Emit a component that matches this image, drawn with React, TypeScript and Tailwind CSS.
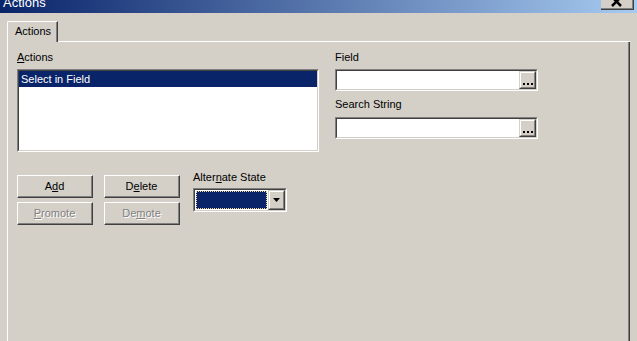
import React from "react";

function Btn({ children, disabled, w }: { children: React.ReactNode; disabled?: boolean; w: string }) {
  return (
    <div className={`${w} h-[23px] border border-t-white border-l-white border-b-[#404040] border-r-[#404040] bg-[#d4d0c8]`}>
      <div
        className={`w-full h-full border-b border-r border-[#808080] flex items-center justify-center text-[11px] leading-[13px] ${
          disabled ? "text-[#808080] [text-shadow:1px_1px_0_#ffffff]" : "text-black"
        }`}
      >
        {children}
      </div>
    </div>
  );
}

function Sunken({ children, className }: { children: React.ReactNode; className: string }) {
  return (
    <div className={`${className} border border-t-[#808080] border-l-[#808080] border-b-white border-r-white`}>
      <div className="w-full h-full border border-t-[#404040] border-l-[#404040] border-b-[#d4d0c8] border-r-[#d4d0c8] bg-white flex">
        {children}
      </div>
    </div>
  );
}

function SmallRaised({ children }: { children: React.ReactNode }) {
  return (
    <div className="w-[17px] h-full border border-t-[#d4d0c8] border-l-[#d4d0c8] border-b-[#404040] border-r-[#404040] bg-[#d4d0c8]">
      <div className="w-full h-full border border-t-white border-l-white border-b-[#808080] border-r-[#808080] flex items-center justify-center">
        {children}
      </div>
    </div>
  );
}

function Dots() {
  return (
    <svg width="13" height="16" viewBox="0 0 13 16">
      <rect x="2" y="11" width="2" height="2" fill="#000" />
      <rect x="6" y="11" width="2" height="2" fill="#000" />
      <rect x="10" y="11" width="2" height="2" fill="#000" />
    </svg>
  );
}

export default function App() {
  return (
    <div className="w-[637px] h-[341px] overflow-hidden bg-[#d4d0c8] flex flex-col font-['Liberation_Sans',Arial,sans-serif] text-black">
      {/* title bar */}
      <div className="h-[13px] shrink-0 flex items-start justify-between pl-[3px] pr-[3px] overflow-hidden bg-[linear-gradient(to_right,#0a246a,#a6caf0)]">
        <span className="text-white text-[13px] leading-[13px] -mt-[4px]">Actions</span>
        <div className="w-[33px] h-[10px] border-b border-r border-[#404040] bg-[#d4d0c8]">
          <div className="w-full h-full border-b border-r border-[#808080] overflow-hidden">
            <svg width="31" height="9" viewBox="0 0 31 9">
              <path d="M11 -3 L20 6 M20 -3 L11 6" stroke="#000" strokeWidth="2.5" />
            </svg>
          </div>
        </div>
      </div>

      <div className="h-[8px] shrink-0" />

      {/* tab strip */}
      <div className="ml-[7px] w-[623px] h-[21px] shrink-0 flex items-stretch">
        <div className="w-[51px] h-[21px] border-t border-l border-r border-t-white border-l-white border-r-[#404040] rounded-tl-[2px] bg-[#d4d0c8]">
          <div className="w-full h-full border-r border-[#808080] pl-[7px] pt-[3px] text-[11px] leading-[13px]">Actions</div>
        </div>
        <div className="flex-1 border-b border-white" />
      </div>

      {/* panel */}
      <div className="ml-[7px] w-[623px] flex-1 border-l border-r border-l-white border-r-[#404040]">
        <div className="h-full border-r border-[#808080] pl-[9px] pt-[9px] flex gap-[16px] text-[11px] leading-[13px]">
          {/* left column */}
          <div className="w-[302px] flex flex-col">
            <div>
              <span className="underline">A</span>ctions
            </div>
            <Sunken className="mt-[5px] h-[83px] w-[302px]">
              <div className="flex-1">
                <div className="h-[16px] bg-[#0a246a] text-white pl-[2px] flex items-center">Select in Field</div>
              </div>
            </Sunken>

            <div className="mt-[19px] flex items-start">
              <div className="mt-[4px] grid grid-cols-[76px_76px] gap-x-[11px] gap-y-[4px]">
                <Btn w="w-[76px]">
                  A<span className="underline">d</span>d
                </Btn>
                <Btn w="w-[76px]">
                  D<span className="underline">e</span>lete
                </Btn>
                <Btn w="w-[76px]" disabled>
                  <span className="underline">P</span>romote
                </Btn>
                <Btn w="w-[76px]" disabled>
                  De<span className="underline">m</span>ote
                </Btn>
              </div>
              <div className="ml-[13px] flex flex-col">
                <div>
                  Alter<span className="underline">n</span>ate State
                </div>
                <Sunken className="mt-[4px] w-[94px] h-[24px]">
                  <div className="flex-1 p-px bg-white">
                    <div className="w-full h-full bg-[#0a246a] border border-dotted border-[#f5db95]" />
                  </div>
                  <SmallRaised>
                    <svg width="7" height="4" viewBox="0 0 7 4">
                      <path d="M0 0 H7 L3.5 4 Z" fill="#000" />
                    </svg>
                  </SmallRaised>
                </Sunken>
              </div>
            </div>
          </div>

          {/* right column */}
          <div className="w-[203px] flex flex-col">
            <div>Field</div>
            <Sunken className="mt-[5px] w-[203px] h-[22px]">
              <div className="flex-1" />
              <SmallRaised>
                <Dots />
              </SmallRaised>
            </Sunken>
            <div className="mt-[7px]">Search String</div>
            <Sunken className="mt-[6px] w-[203px] h-[22px]">
              <div className="flex-1" />
              <SmallRaised>
                <Dots />
              </SmallRaised>
            </Sunken>
          </div>
        </div>
      </div>
    </div>
  );
}
